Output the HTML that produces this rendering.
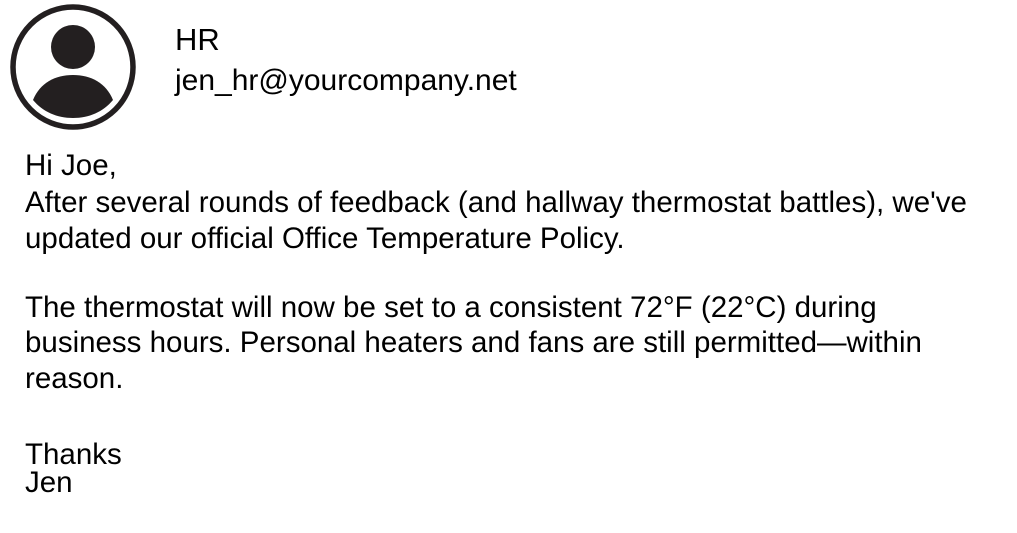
<!DOCTYPE html>
<html><head><meta charset="utf-8"><style>
body{margin:0;width:1017px;height:533px;background:#fff;overflow:hidden;position:relative;font-family:"Liberation Sans",Arial,sans-serif;color:#000}
.l{position:absolute;left:25px;font-size:29.5px;line-height:36px;white-space:nowrap}
</style></head><body>
<svg style="position:absolute;left:0;top:0" width="150" height="140">
<circle cx="73" cy="67" r="60" fill="none" stroke="#231f20" stroke-width="5.5"/>
<circle cx="73" cy="47" r="22" fill="#231f20"/>
<path d="M33 100 C40 83 55 75 73 75 C91 75 106 83 113 100 C103 112 89 118 73 118 C57 118 43 112 33 100 Z" fill="#231f20"/>
</svg>
<div class="l" style="left:175px;top:22px;font-size:31px">HR</div>
<div class="l" style="left:175px;top:63px;font-size:30px">jen_hr@yourcompany.net</div>
<div class="l" style="top:148px">Hi Joe,</div>
<div class="l" style="top:185px">After several rounds of feedback (and hallway thermostat battles), we've</div>
<div class="l" style="top:221px">updated our official Office Temperature Policy.</div>
<div class="l" style="top:290px">The thermostat will now be set to a consistent 72°F (22°C) during</div>
<div class="l" style="top:325px">business hours. Personal heaters and fans are still permitted—within</div>
<div class="l" style="top:361px">reason.</div>
<div class="l" style="top:437px">Thanks</div>
<div class="l" style="top:465px">Jen</div>
</body></html>
